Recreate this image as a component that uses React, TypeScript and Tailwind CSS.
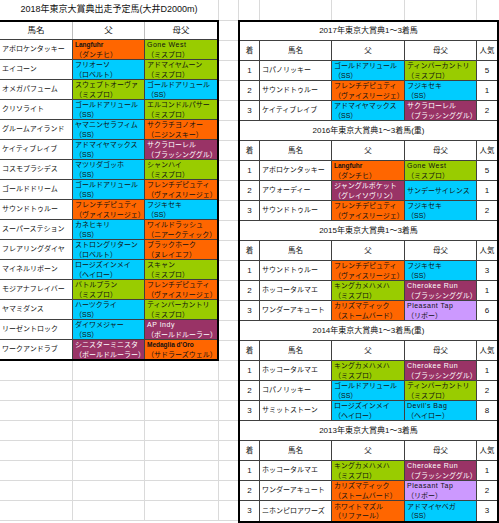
import React from 'react';

type Color = 'o' | 'c' | 'g' | 'm' | 'l';
type Ped = { c: Color; t: string[]; s?: boolean };

const BG: Record<Color, string> = {
  o: 'bg-[#ff6600] text-[#111]',
  c: 'bg-[#00ccff] text-[#111]',
  g: 'bg-[#99cc00] text-[#111]',
  m: 'bg-[#993366] text-white',
  l: 'bg-[#cc99ff] text-[#111]',
};

const p = (c: Color, ...t: string[]): Ped => ({ c, t });
const ps = (c: Color, ...t: string[]): Ped => ({ c, t, s: true });

const entries: [string, Ped, Ped][] = [
  ['アポロケンタッキー', ps('o', 'Langfuhr', '（ダンチヒ）'), p('g', 'Gone West', '（ミスプロ）')],
  ['エイコーン', p('c', 'フリオーソ', '（ロベルト）'), p('g', 'アドマイヤムーン', '（ミスプロ）')],
  ['オメガパフューム', p('g', 'スウェプトオーヴァ', '（ミスプロ）'), p('c', 'ゴールドアリュール', '（SS）')],
  ['クリソライト', p('c', 'ゴールドアリュール', '（SS）'), p('g', 'エルコンドルパサー', '（ミスプロ）')],
  ['グルームアイランド', p('c', 'ヤマニンセラフィム', '（SS）'), p('o', 'サクラチヨノオー', '（ニジンスキー）')],
  ['ケイティブレイブ', p('c', 'アドマイヤマックス', '（SS）'), p('m', 'サクラローレル', '（ブラッシンググル）')],
  ['コスモプラシデス', p('c', 'マツリダゴッホ', '（SS）'), p('g', 'シャンハイ', '（ミスプロ）')],
  ['ゴールドドリーム', p('c', 'ゴールドアリュール', '（SS）'), p('o', 'フレンチデピュティ', '（ヴァイスリージェ）')],
  ['サウンドトゥルー', p('o', 'フレンチデピュティ', '（ヴァイスリージェ）'), p('c', 'フジキセキ', '（SS）')],
  ['スーパーステション', p('c', 'カネヒキリ', '（SS）'), p('o', 'ワイルドラッシュ', '（ニアークティック）')],
  ['フレアリングダイヤ', p('c', 'ストロングリターン', '（ロベルト）'), p('o', 'ブラックホーク', '（ヌレイエフ）')],
  ['マイネルリボーン', p('c', 'ロージズインメイ', '（ヘイロー）'), p('g', 'スキャン', '（ミスプロ）')],
  ['モジアナフレイバー', p('g', 'バトルプラン', '（ミスプロ）'), p('o', 'フレンチデピュティ', '（ヴァイスリージェ）')],
  ['ヤマミダンス', p('c', 'ハーツクライ', '（SS）'), p('g', 'ティンバーカントリ', '（ミスプロ）')],
  ['リーゼントロック', p('c', 'ダイワメジャー', '（SS）'), p('m', 'AP Indy', '（ボールドルーラー）')],
  ['ワークアンドラブ', p('m', 'シニスターミニスタ', '（ボールドルーラー）'), ps('o', "Medaglia d'Oro", '（サドラーズウェル）')],
];

type Result = [string, string, Ped, Ped, string];

const results: { title: string; rows: Result[] }[] = [
  {
    title: '2017年東京大賞典1〜3着馬',
    rows: [
      ['1', 'コパノリッキー', p('c', 'ゴールドアリュール', '（SS）'), p('g', 'ティンバーカントリ', '（ミスプロ）'), '5'],
      ['2', 'サウンドトゥルー', p('o', 'フレンチデピュティ', '（ヴァイスリージェ）'), p('c', 'フジキセキ', '（SS）'), '1'],
      ['3', 'ケイティブレイブ', p('c', 'アドマイヤマックス', '（SS）'), p('m', 'サクラローレル', '（ブラッシンググル）'), '2'],
    ],
  },
  {
    title: '2016年東京大賞典1〜3着馬(重)',
    rows: [
      ['1', 'アポロケンタッキー', ps('o', 'Langfuhr', '（ダンチヒ）'), p('g', 'Gone West', '（ミスプロ）'), '5'],
      ['2', 'アウォーディー', p('m', 'ジャングルポケット', '（グレイソヴリン）'), p('c', 'サンデーサイレンス'), '1'],
      ['3', 'サウンドトゥルー', p('o', 'フレンチデピュティ', '（ヴァイスリージェ）'), p('c', 'フジキセキ', '（SS）'), '2'],
    ],
  },
  {
    title: '2015年東京大賞典1〜3着馬',
    rows: [
      ['1', 'サウンドトゥルー', p('o', 'フレンチデピュティ', '（ヴァイスリージェ）'), p('c', 'フジキセキ', '（SS）'), '3'],
      ['2', 'ホッコータルマエ', p('g', 'キングカメハメハ', '（ミスプロ）'), p('m', 'Cherokee Run', '（ブラッシンググル）'), '1'],
      ['3', 'ワンダーアキュート', p('o', 'カリズマティック', '（ストームバード）'), p('l', 'Pleasant Tap', '（リボー）'), '6'],
    ],
  },
  {
    title: '2014年東京大賞典1〜3着馬(重)',
    rows: [
      ['1', 'ホッコータルマエ', p('g', 'キングカメハメハ', '（ミスプロ）'), p('m', 'Cherokee Run', '（ブラッシンググル）'), '1'],
      ['2', 'コパノリッキー', p('c', 'ゴールドアリュール', '（SS）'), p('g', 'ティンバーカントリ', '（ミスプロ）'), '2'],
      ['3', 'サミットストーン', p('c', 'ロージズインメイ', '（ヘイロー）'), p('c', "Devil's Bag", '（ヘイロー）'), '8'],
    ],
  },
  {
    title: '2013年東京大賞典1〜3着馬',
    rows: [
      ['1', 'ホッコータルマエ', p('g', 'キングカメハメハ', '（ミスプロ）'), p('m', 'Cherokee Run', '（ブラッシンググル）'), '1'],
      ['2', 'ワンダーアキュート', p('o', 'カリズマティック', '（ストームバード）'), p('l', 'Pleasant Tap', '（リボー）'), '2'],
      ['3', 'ニホンピロアワーズ', p('o', 'ホワイトマズル', '（リファール）'), p('c', 'アドマイヤベガ', '（SS）'), '3'],
    ],
  },
];

function PedCell({ ped, className }: { ped: Ped; className: string }) {
  return (
    <div className={`${className} ${BG[ped.c]} flex flex-col justify-center overflow-hidden whitespace-nowrap pl-[2px]`}>
      {ped.t.map((line, i) => {
        const latin = /^[\x20-\x7e]+$/.test(line);
        const cls = latin
          ? ped.s
            ? 'text-[6.5px] font-bold leading-[9.5px]'
            : 'text-[7px] tracking-[0.5px] leading-[9.5px]'
          : 'text-[7px] leading-[9.5px]';
        return (
          <span key={i} className={cls}>
            {line}
          </span>
        );
      })}
    </div>
  );
}

function LeftTable() {
  return (
    <div className="flex w-[219px] flex-col">
      <div className="flex h-[20px] items-center justify-center border-r border-[#dadada] text-[9px]">
        2018年東京大賞典出走予定馬(大井D2000m)
      </div>
      <div className="border-y-2 border-r-2 border-black">
        <div className="flex h-[18px] border-b border-[#404040] text-[8.5px]">
          <div className="flex w-[73px] items-center justify-center border-r border-[#bdbdbd]">馬名</div>
          <div className="flex w-[72px] items-center justify-center border-r border-[#bdbdbd]">父</div>
          <div className="flex flex-1 items-center justify-center">母父</div>
        </div>
        {entries.map(([name, sire, dam], i) => (
          <div
            key={name}
            className={i === entries.length - 1 ? 'flex h-[19px]' : 'flex h-[20px] border-b border-[#404040]'}
          >
            <div className="flex w-[73px] items-center whitespace-nowrap border-r border-[#404040] pl-[2px] text-[7px]">
              {name}
            </div>
            <PedCell ped={sire} className="w-[72px] border-r border-[#404040]" />
            <PedCell ped={dam} className="flex-1" />
          </div>
        ))}
      </div>
      {Array.from({ length: 8 }).map((_, i) => (
        <div key={i} className="flex h-[20px] shrink-0 border-b border-[#dadada]">
          <div className="w-[73px] border-r border-[#dadada]" />
          <div className="w-[72px] border-r border-[#dadada]" />
          <div className="flex-1 border-r border-[#dadada]" />
        </div>
      ))}
    </div>
  );
}

function Gap() {
  return (
    <div className="flex w-[19px] flex-col">
      <div className="h-[21px] shrink-0 border-b border-[#dadada]" />
      {Array.from({ length: 25 }).map((_, i) => (
        <div key={i} className="h-[20px] shrink-0 border-b border-[#dadada]" />
      ))}
    </div>
  );
}

function RightTables() {
  let rowIndex = 0;
  const rowClass = () => {
    const idx = rowIndex++;
    if (idx === 0) return 'h-[19px] border-b border-[#404040]';
    if (idx === 24) return 'h-[20px]';
    return 'h-[20px] border-b border-[#404040]';
  };
  return (
    <div className="flex w-[261px] flex-col">
      <div className="flex h-[20px]">
        <div className="w-[22px] border-x border-[#dadada]" />
        <div className="w-[72px] border-r border-[#dadada]" />
        <div className="w-[73px] border-r border-[#dadada]" />
        <div className="w-[72px] border-r border-[#dadada]" />
        <div className="flex-1" />
      </div>
      <div className="border-2 border-black">
        {results.map((sec) => (
          <React.Fragment key={sec.title}>
            <div className={`flex items-center justify-center text-[8px] ${rowClass()}`}>{sec.title}</div>
            <div className={`flex text-[7.5px] ${rowClass()}`}>
              <div className="flex w-[20px] items-center justify-center border-r border-[#404040]">着</div>
              <div className="flex w-[72px] items-center justify-center border-r border-[#404040]">馬名</div>
              <div className="flex w-[73px] items-center justify-center border-r border-[#404040]">父</div>
              <div className="flex w-[72px] items-center justify-center border-r border-[#404040]">母父</div>
              <div className="flex flex-1 items-center justify-center whitespace-nowrap">人気</div>
            </div>
            {sec.rows.map(([rank, name, sire, dam, pop]) => (
              <div key={rank} className={`flex ${rowClass()}`}>
                <div className="flex w-[20px] items-center justify-center border-r border-[#404040] text-[8px]">
                  {rank}
                </div>
                <div className="flex w-[72px] items-center whitespace-nowrap border-r border-[#404040] pl-[2px] text-[7px]">
                  {name}
                </div>
                <PedCell ped={sire} className="w-[73px] border-r border-[#404040]" />
                <PedCell ped={dam} className="w-[72px] border-r border-[#404040]" />
                <div className="flex flex-1 items-center justify-center text-[8px]">{pop}</div>
              </div>
            ))}
          </React.Fragment>
        ))}
      </div>
    </div>
  );
}

export default function App() {
  return (
    <div className="flex h-[523px] w-[499px] overflow-hidden bg-white font-['Liberation_Sans','Noto_Sans_CJK_JP',sans-serif] text-[#111]">
      <LeftTable />
      <Gap />
      <RightTables />
    </div>
  );
}
